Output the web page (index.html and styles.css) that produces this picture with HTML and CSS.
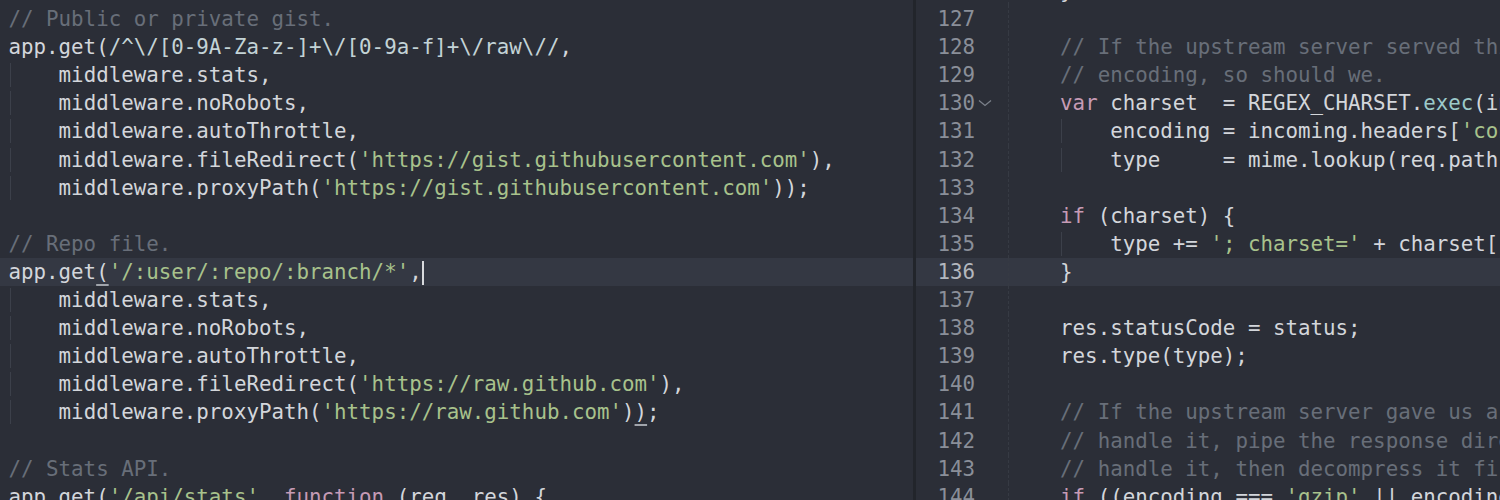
FILE: index.html
```html
<!DOCTYPE html>
<html lang="en">
    <head>
        <meta charset="UTF-8">
        <title>server.js</title>
        <link rel="stylesheet" href="styles.css">
    </head>
    <body>
        <div class="editor">

            <!-- left pane: routes -->
            <div class="pane left">
                <div class="lines">
                    <div class="row"><span class="code"> </span></div>
                    <div class="row"><span class="code"><span class="c">// Public or private gist.</span></span></div>
                    <div class="row"><span class="code">app.get(<span class="r">/^\/[0-9A-Za-z-]+\/[0-9a-f]+\/raw\//</span>,</span></div>
                    <div class="row"><span class="code"><span class="ind">    </span>middleware.stats,</span></div>
                    <div class="row"><span class="code"><span class="ind">    </span>middleware.noRobots,</span></div>
                    <div class="row"><span class="code"><span class="ind">    </span>middleware.autoThrottle,</span></div>
                    <div class="row"><span class="code"><span class="ind">    </span>middleware.fileRedirect(<span class="s">'https://gist.githubusercontent.com'</span>),</span></div>
                    <div class="row"><span class="code"><span class="ind">    </span>middleware.proxyPath(<span class="s">'https://gist.githubusercontent.com'</span>));</span></div>
                    <div class="row"><span class="code"> </span></div>
                    <div class="row"><span class="code"><span class="c">// Repo file.</span></span></div>
                    <div class="row active"><span class="code">app.get<span class="match">(</span><span class="s">'/:user/:repo/:branch/*'</span>,<span class="cursor"></span></span></div>
                    <div class="row"><span class="code"><span class="ind">    </span>middleware.stats,</span></div>
                    <div class="row"><span class="code"><span class="ind">    </span>middleware.noRobots,</span></div>
                    <div class="row"><span class="code"><span class="ind">    </span>middleware.autoThrottle,</span></div>
                    <div class="row"><span class="code"><span class="ind">    </span>middleware.fileRedirect(<span class="s">'https://raw.github.com'</span>),</span></div>
                    <div class="row"><span class="code"><span class="ind">    </span>middleware.proxyPath(<span class="s">'https://raw.github.com'</span>)<span class="match">)</span>;</span></div>
                    <div class="row"><span class="code"> </span></div>
                    <div class="row"><span class="code"><span class="c">// Stats API.</span></span></div>
                    <div class="row"><span class="code">app.get(<span class="s">'/api/stats'</span>, <span class="k">function</span> (req, res) {</span></div>
                </div>
            </div>

            <div class="divider"></div>

            <!-- right pane: proxy response -->
            <div class="pane right">
                <div class="lines">
                    <div class="row"><span class="ln">126</span><span class="fold"></span><span class="code">    }</span></div>
                    <div class="row"><span class="ln">127</span><span class="fold"></span><span class="code"> </span></div>
                    <div class="row"><span class="ln">128</span><span class="fold"></span><span class="code">    <span class="c">// If the upstream server served this file with a specific character</span></span></div>
                    <div class="row"><span class="ln">129</span><span class="fold"></span><span class="code">    <span class="c">// encoding, so should we.</span></span></div>
                    <div class="row"><span class="ln">130</span><span class="fold"><svg width="14" height="8" viewBox="0 0 14 8"><polyline points="1,1.5 7,6.5 13,1.5" fill="none" stroke="#7b808a" stroke-width="1.3"/></svg></span><span class="code">    <span class="k">var</span> charset  = REGEX_CHARSET.<span class="f">exec</span>(incoming.headers[<span class="s">'content-type'</span>]),</span></div>
                    <div class="row"><span class="ln">131</span><span class="fold"></span><span class="code">    <span class="ind">    </span>encoding = incoming.headers[<span class="s">'content-encoding'</span>],</span></div>
                    <div class="row"><span class="ln">132</span><span class="fold"></span><span class="code">    <span class="ind">    </span>type     = mime.lookup(req.path);</span></div>
                    <div class="row"><span class="ln">133</span><span class="fold"></span><span class="code"> </span></div>
                    <div class="row"><span class="ln">134</span><span class="fold"></span><span class="code">    <span class="k">if</span> (charset) {</span></div>
                    <div class="row"><span class="ln">135</span><span class="fold"></span><span class="code">    <span class="ind">    </span>type += <span class="s">'; charset='</span> + charset[1];</span></div>
                    <div class="row active"><span class="ln">136</span><span class="fold"></span><span class="code">    }</span></div>
                    <div class="row"><span class="ln">137</span><span class="fold"></span><span class="code"> </span></div>
                    <div class="row"><span class="ln">138</span><span class="fold"></span><span class="code">    res.statusCode = status;</span></div>
                    <div class="row"><span class="ln">139</span><span class="fold"></span><span class="code">    res.type(type);</span></div>
                    <div class="row"><span class="ln">140</span><span class="fold"></span><span class="code"> </span></div>
                    <div class="row"><span class="ln">141</span><span class="fold"></span><span class="code">    <span class="c">// If the upstream server gave us a gzipped response and the client</span></span></div>
                    <div class="row"><span class="ln">142</span><span class="fold"></span><span class="code">    <span class="c">// handle it, pipe the response directly to the client.</span></span></div>
                    <div class="row"><span class="ln">143</span><span class="fold"></span><span class="code">    <span class="c">// handle it, then decompress it first.</span></span></div>
                    <div class="row"><span class="ln">144</span><span class="fold"></span><span class="code">    <span class="k">if</span> ((encoding === <span class="s">'gzip'</span> || encoding === <span class="s">'deflate'</span>)) {</span></div>
                </div>
            </div>

        </div>
    </body>
</html>
```

FILE: styles.css
```css
body {
    margin: 0;
    background-color: #2b2e37;
    overflow: hidden;
}

.editor {
    display: flex;
    height: 500px;
    font-family: "DejaVu Sans Mono", "Liberation Mono", monospace;
    font-size: 20.8px;
    color: #d3d6db;
}

.pane {
    overflow: hidden;
    background-color: #2b2e37;
}

.left {
    width: 913px;
    flex: none;
}

.right {
    flex: 1;
}

.divider {
    width: 3px;
    flex: none;
    background-color: #22252b;
}

.lines {
    margin-top: -23px;
}

.row {
    display: flex;
    height: 28.1px;
    line-height: 28.1px;
    white-space: pre;
}

.row.active {
    background-color: #343843;
}

.left .code {
    padding-left: 8.5px;
}

.ln {
    width: 59px;
    flex: none;
    text-align: right;
    color: #8a8f99;
}

.active .ln {
    color: #b3b7be;
}

.fold {
    width: 33px;
    flex: none;
    display: flex;
    align-items: center;
    padding-left: 3px;
    box-sizing: border-box;
}

.right .code {
    border-left: 1px dashed #363a43;
    padding-left: 1px;
}

/* indent guide */
.ind {
    background: linear-gradient(#3c404a, #3c404a) no-repeat 1px 0 / 1px 100%;
}

.c {
    color: #686e79;
}

.s {
    color: #a8c28c;
}

.k {
    color: #c69bb5;
}

.r {
    color: #c3d3d6;
}

.f {
    color: #9ccaca;
}

.match {
    text-decoration: underline;
    text-decoration-color: #a0a4ab;
    text-underline-offset: 5px;
}

.cursor {
    display: inline-block;
    width: 0;
    height: 24px;
    border-left: 2px solid #d8dadd;
    vertical-align: middle;
}
```
